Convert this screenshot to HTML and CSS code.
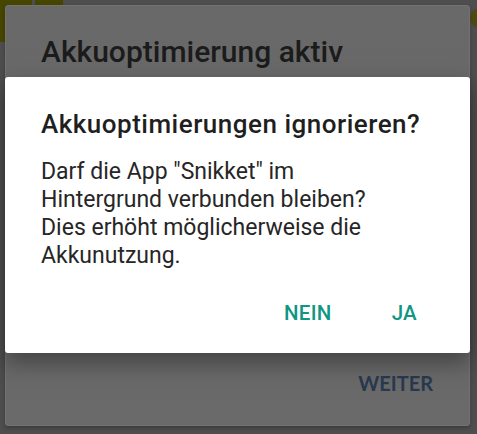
FILE: index.html
```html
<html>
<head>
    <title>Akkuoptimierung</title>
    <link rel="stylesheet" href="styles.css">
</head>
<body>
    <div class="screen">
        <div class="app-bar">
            <div class="tile tile-main"></div>
            <div class="tile tile-small"></div>
            <div class="bar-fill"></div>
            <div class="avatar"></div>
        </div>

        <div class="dialog dialog-back">
            <h2 class="back-title">Akkuoptimierung aktiv</h2>
            <div class="back-actions">
                <button class="back-btn">WEITER</button>
            </div>
        </div>

        <div class="dialog dialog-front">
            <h3 class="front-title">Akkuoptimierungen ignorieren?</h3>
            <p class="front-text">Darf die App "Snikket" im Hintergrund verbunden bleiben? Dies erhöht möglicherweise die Akkunutzung.</p>
            <div class="front-actions">
                <button class="text-btn">NEIN</button>
                <button class="text-btn">JA</button>
            </div>
        </div>
    </div>
</body>
</html>
```

FILE: styles.css
```css
body {
    margin: 0;
    background: #4e4e4e;
    font-family: Roboto, "Noto Sans", sans-serif;
}

.screen {
    position: relative;
    width: 477px;
    height: 434px;
    overflow: hidden;
}

/* app behind the dim, only edges show */
.app-bar {
    display: flex;
    align-items: flex-start;
    gap: 3px;
}

.tile {
    background: #474600;
}

.tile-main {
    width: 32px;
    height: 42px;
}

.tile-small {
    width: 28px;
    height: 30px;
}

.bar-fill {
    flex: 1;
}

.avatar {
    width: 20px;
    height: 20px;
    margin-top: 8px;
    margin-right: -13px;
    border-radius: 50%;
    background: #4d4a12;
}

.dialog {
    position: absolute;
    left: 5px;
    width: 465px;
    border-radius: 3px;
    box-sizing: border-box;
}

.dialog-back {
    top: 5px;
    height: 421px;
    background: linear-gradient(#696969, #666666 70%, #6a6a6a);
    border: 1px solid #727272;
    display: flex;
    flex-direction: column;
    box-shadow: 0 2px 4px rgba(0, 0, 0, 0.25);
}

.back-title {
    margin: 0;
    padding: 29px 0 0 35px;
    font-size: 30px;
    line-height: 34px;
    font-weight: 500;
    color: #1b1b1b;
}

.back-actions {
    margin-top: auto;
    display: flex;
    justify-content: flex-end;
    padding: 0 36px 30px 0;
}

.back-btn {
    background: none;
    border: none;
    padding: 0;
    font-family: Lato, sans-serif;
    font-weight: bold;
    font-size: 20px;
    line-height: 24px;
    color: #28394f;
}

.dialog-front {
    top: 77px;
    height: 276px;
    background: #ffffff;
    padding: 32px 36px 0 36px;
    box-shadow: 0 10px 22px rgba(0, 0, 0, 0.35);
}

.front-title {
    margin: 0;
    font-size: 26px;
    line-height: 30px;
    font-weight: 500;
    letter-spacing: 0.5px;
    color: #1f1f1f;
}

.front-text {
    margin: 19px 0 0 0;
    font-size: 23px;
    line-height: 28px;
    color: #262626;
    padding-right: 40px;
}

.front-actions {
    display: flex;
    justify-content: flex-end;
    gap: 60px;
    margin-top: 31px;
    padding-right: 17px;
}

.text-btn {
    background: none;
    border: none;
    padding: 0;
    font-family: Roboto, sans-serif;
    font-weight: 500;
    font-size: 20.5px;
    line-height: 24px;
    letter-spacing: 0.3px;
    color: #0f9684;
}
```
